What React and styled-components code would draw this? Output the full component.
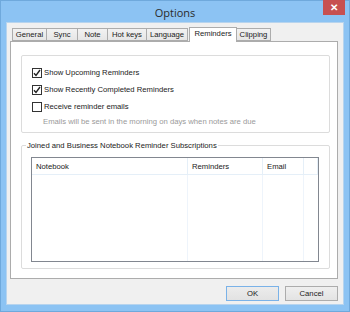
import React from "react";
import styled, { createGlobalStyle } from "styled-components";

const GlobalStyle = createGlobalStyle`
  body {
    margin: 0;
    font-family: "Liberation Sans", Arial, sans-serif;
  }
`;

const Window = styled.div`
  width: 350px;
  height: 312px;
  box-sizing: border-box;
  background: #8cc3f3;
  border: 1px solid #6fa9dc;
  display: flex;
  flex-direction: column;
  padding: 0 5px 6px 5px;
`;

const TitleBar = styled.div`
  height: 21px;
  display: grid;
  grid-template-columns: 1fr auto 1fr;
  align-items: start;
`;

const Title = styled.div`
  grid-column: 2;
  font-family: "Open Sans", "Liberation Sans", sans-serif;
  font-size: 11px;
  color: #2b2b2b;
  line-height: 23px;
`;

const CloseButton = styled.div`
  grid-column: 3;
  justify-self: end;
  margin-top: -1px;
  margin-right: -1px;
  width: 22px;
  height: 15px;
  background: #c75050;
  color: #fff;
  font-size: 10px;
  font-weight: bold;
  display: grid;
  place-items: center;
`;

const Client = styled.div`
  flex: 1;
  background: #f0f0f0;
  border: 1px solid #b7d4ee;
  display: flex;
  flex-direction: column;
  padding: 4px 5px 3px 3px;
`;

const TabStrip = styled.div`
  display: flex;
  align-items: flex-end;
  height: 14px;
  padding-left: 2px;
  position: relative;
  z-index: 1;
`;

const Tab = styled.div`
  box-sizing: border-box;
  width: ${(p) => p.$w}px;
  height: ${(p) => (p.$active ? "15px" : "13px")};
  margin-bottom: ${(p) => (p.$active ? "-1px" : "0")};
  margin-left: ${(p) => (p.$first ? "0" : p.$active ? "1px" : "-1px")};
  border: 1px solid #acacac;
  border-bottom: ${(p) => (p.$active ? "none" : "1px solid #acacac")};
  background: ${(p) =>
    p.$active ? "#fff" : "linear-gradient(#f2f2f2, #e6e6e6)"};
  font-size: 7.7px;
  color: #1a1a1a;
  line-height: 12px;
  text-align: center;
  white-space: nowrap;
  position: relative;
  z-index: ${(p) => (p.$active ? 2 : 1)};
`;

const Panel = styled.div`
  height: 238px;
  box-sizing: border-box;
  background: #fff;
  border: 1px solid #acacac;
  padding: 13px 7px 0 10px;
  display: flex;
  flex-direction: column;
`;

const Group = styled.div`
  border: 1px solid #dcdcdc;
  border-radius: 2px;
  padding: 8px 10px 4px 10px;
  display: flex;
  flex-direction: column;
`;

const CheckRow = styled.label`
  height: 17px;
  display: flex;
  align-items: center;
  gap: 2px;
  font-size: 7.7px;
  color: #1a1a1a;
`;

const Box = styled.span`
  width: 8px;
  height: 8px;
  border: 1px solid #333;
  background: #fff;
  display: grid;
  place-items: center;
`;

const Hint = styled.div`
  height: 13px;
  padding-left: 11px;
  font-size: 7.7px;
  color: #9a9a9a;
  line-height: 13px;
`;

const Fieldset = styled.fieldset`
  margin: 7px 0 0 0;
  border: 1px solid #dcdcdc;
  border-radius: 2px;
  padding: 6px 10px 6px 9px;
  min-width: 0;
`;

const Legend = styled.legend`
  padding: 0 1px;
  margin-left: -5px;
  font-size: 7.7px;
  color: #1a1a1a;
  line-height: 11px;
`;

const ListView = styled.div`
  height: 105px;
  box-sizing: border-box;
  border: 1px solid #828790;
  display: grid;
  grid-template-columns: 156px 75px 41px 1fr;
  grid-template-rows: 17px 1fr;
`;

const HeaderCell = styled.div`
  border-right: 1px solid #e5eff8;
  border-bottom: 1px solid #e5eff8;
  font-size: 7.7px;
  color: #1a1a1a;
  padding-left: 4px;
  line-height: 18px;
`;

const BodyCell = styled.div`
  border-right: 1px solid ${(p) => (p.$last ? "transparent" : "#eef4fb")};
`;

const ButtonRow = styled.div`
  margin-top: 7px;
  display: flex;
  justify-content: flex-end;
  gap: 6px;
`;

const Button = styled.div`
  width: 53px;
  height: 15px;
  box-sizing: border-box;
  border: 1px solid ${(p) => (p.$default ? "#7ab2e8" : "#acacac")};
  background: ${(p) =>
    p.$default ? "linear-gradient(#ececec, #e2e2e2)" : "linear-gradient(#efefef, #e3e3e3)"};
  font-size: 7.7px;
  color: #1a1a1a;
  display: grid;
  place-items: center;
`;

const Check = () => (
  <svg width="8" height="8" viewBox="0 0 8 8">
    <path d="M1 4.2 L3 6.4 L7 1" fill="none" stroke="#222" strokeWidth="1.4" />
  </svg>
);

const tabs = [
  { label: "General", w: 35 },
  { label: "Sync", w: 32 },
  { label: "Note", w: 31 },
  { label: "Hot keys", w: 40 },
  { label: "Language", w: 42 },
  { label: "Reminders", w: 48 },
  { label: "Clipping", w: 35 },
];

const App = () => (
  <>
    <GlobalStyle />
    <Window>
      <TitleBar>
        <Title>Options</Title>
        <CloseButton>✕</CloseButton>
      </TitleBar>
      <Client>
        <TabStrip>
          {tabs.map((t, i) => (
            <Tab
              key={t.label}
              $w={t.w}
              $first={i === 0}
              $active={t.label === "Reminders"}
            >
              {t.label}
            </Tab>
          ))}
        </TabStrip>
        <Panel>
          <Group>
            <CheckRow>
              <Box>
                <Check />
              </Box>
              Show Upcoming Reminders
            </CheckRow>
            <CheckRow>
              <Box>
                <Check />
              </Box>
              Show Recently Completed Reminders
            </CheckRow>
            <CheckRow>
              <Box />
              Receive reminder emails
            </CheckRow>
            <Hint>Emails will be sent in the morning on days when notes are due</Hint>
          </Group>
          <Fieldset>
            <Legend>Joined and Business Notebook Reminder Subscriptions</Legend>
            <ListView>
              <HeaderCell>Notebook</HeaderCell>
              <HeaderCell>Reminders</HeaderCell>
              <HeaderCell>Email</HeaderCell>
              <HeaderCell />
              <BodyCell />
              <BodyCell />
              <BodyCell />
              <BodyCell $last />
            </ListView>
          </Fieldset>
        </Panel>
        <ButtonRow>
          <Button $default>OK</Button>
          <Button>Cancel</Button>
        </ButtonRow>
      </Client>
    </Window>
  </>
);

export default App;
